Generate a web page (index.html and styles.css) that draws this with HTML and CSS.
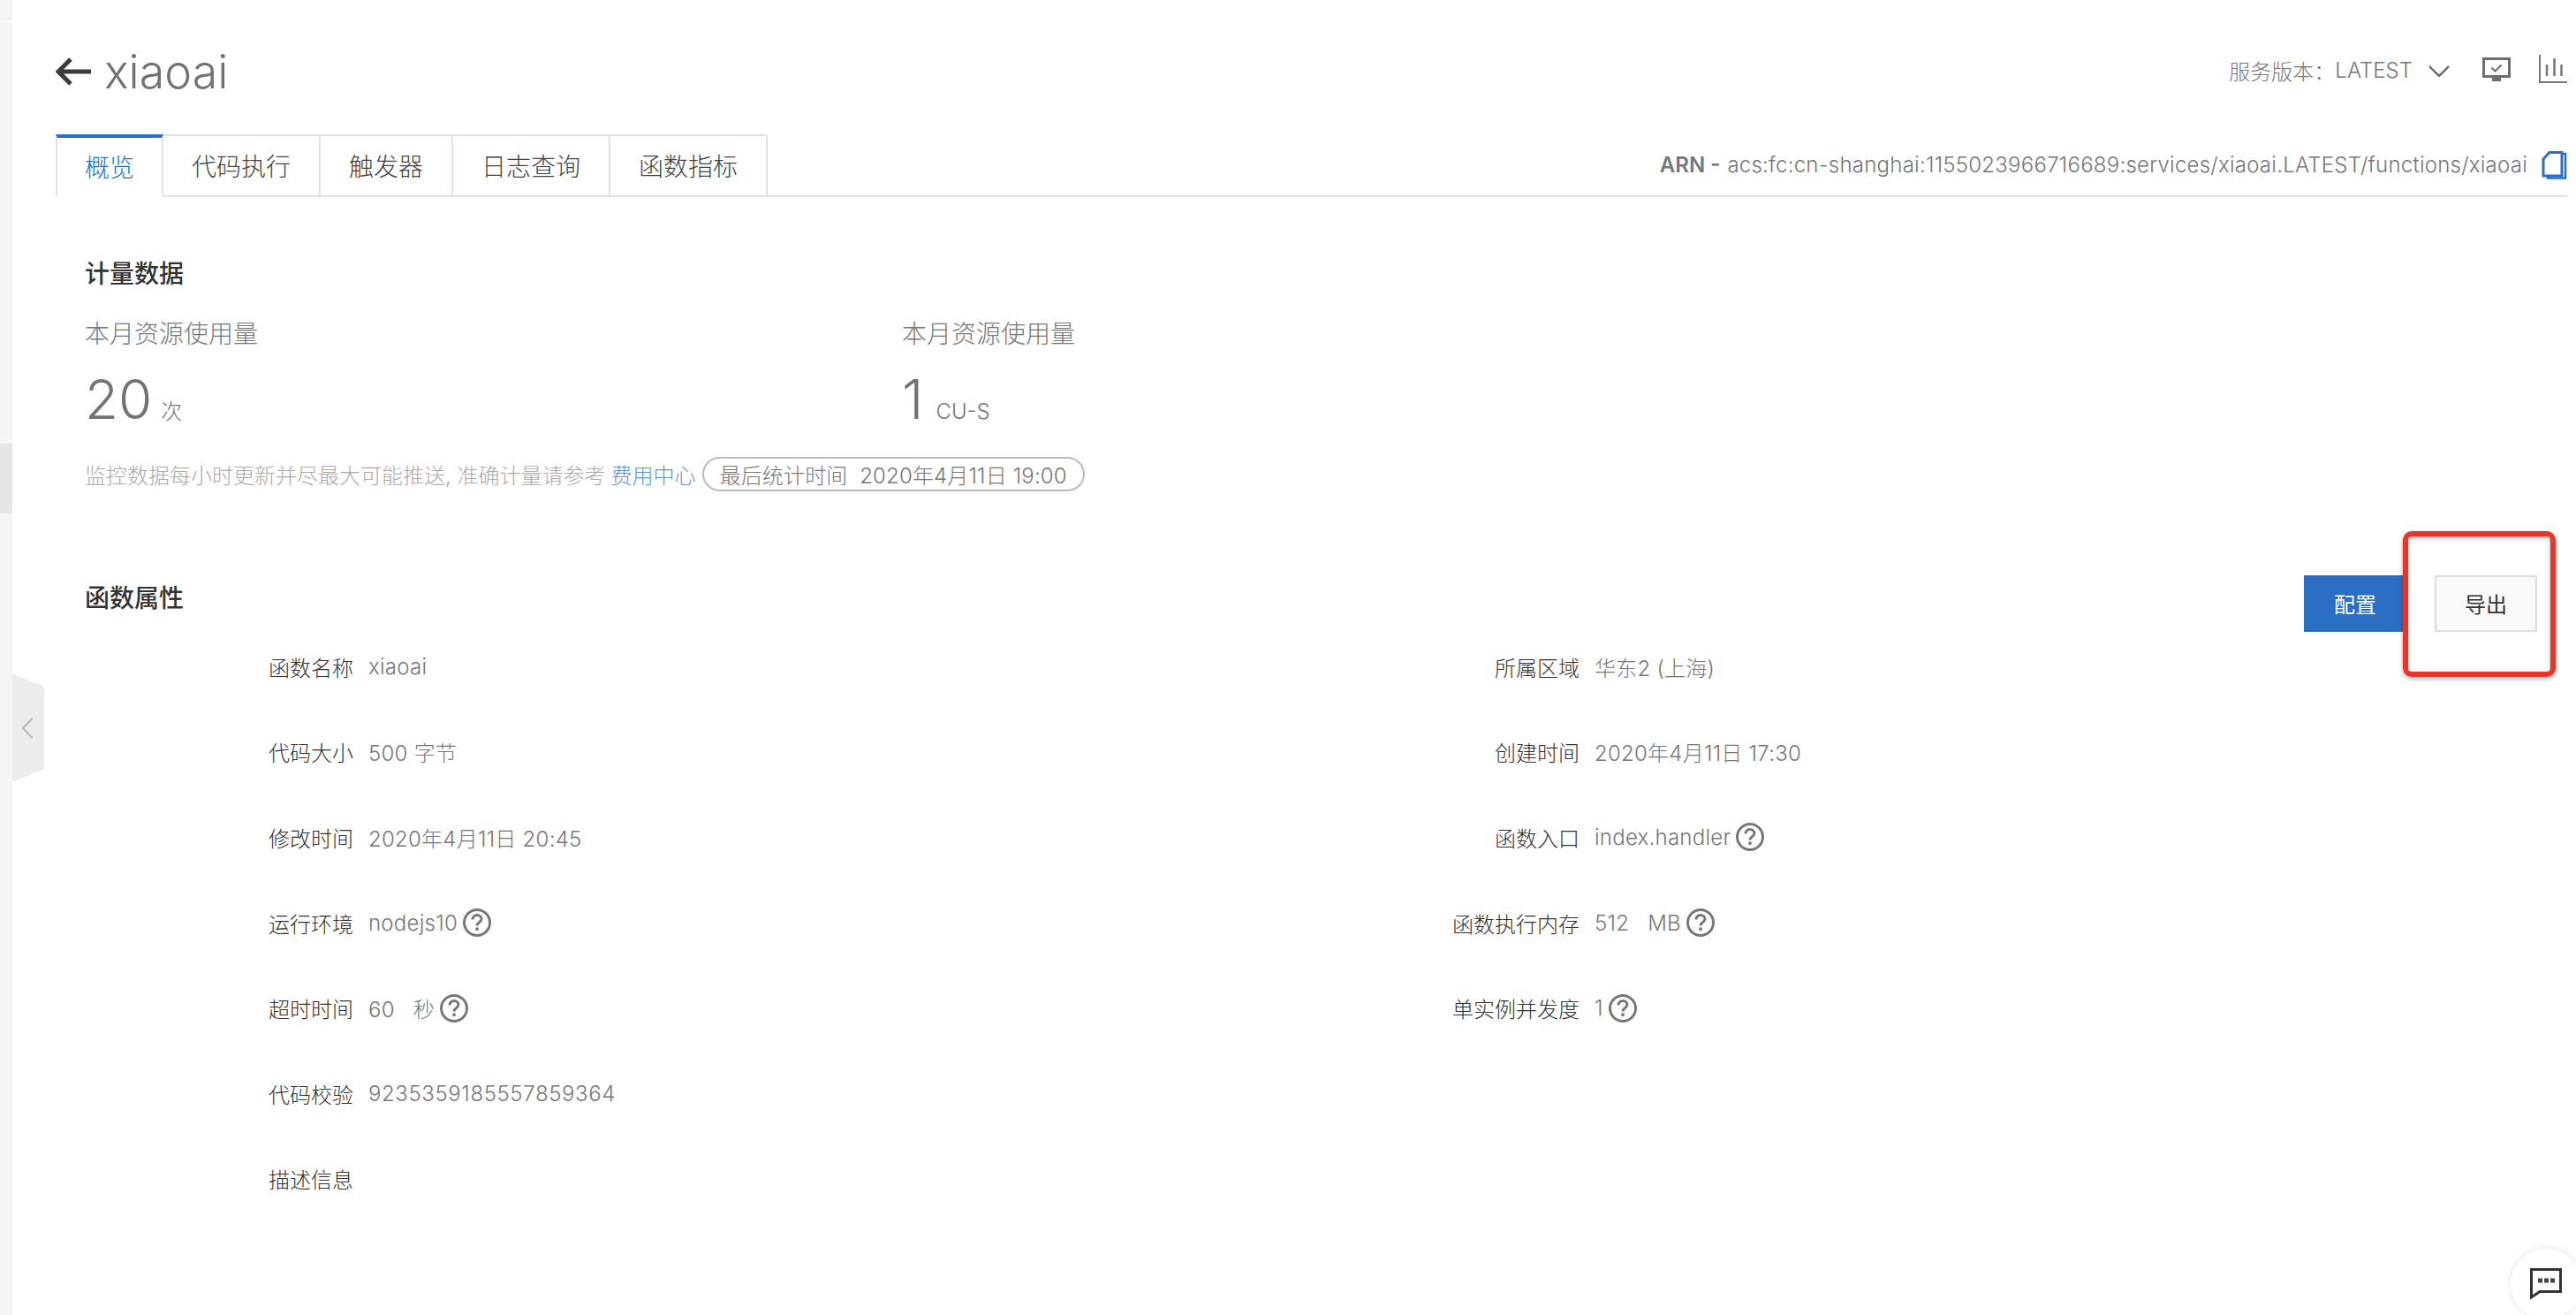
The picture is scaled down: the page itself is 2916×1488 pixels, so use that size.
FILE: index.html
```html
<!DOCTYPE html>
<html lang="zh-CN">
<head>
<meta charset="utf-8">
<title>xiaoai</title>
<link rel="stylesheet" href="styles.css">
</head>
<body>
<div class="app">
  <aside class="rail">
    <div class="rail-line"></div>
    <div class="rail-thumb"></div>
  </aside>
  <main class="main">
    <header class="top">
      <div class="title">
        <svg class="back" viewBox="0 0 40 32" width="40" height="32"><path d="M17 2 3 16l14 14M3 16h37" fill="none" stroke="#383d42" stroke-width="5"/></svg>
        <h1 class="name">xiaoai</h1>
      </div>
      <div class="tools">
        <span class="version">服务版本：</span><span class="latest">LATEST</span>
        <svg class="chev" viewBox="0 0 24 13" width="24" height="13"><path d="M1 1l11 11L23 1" fill="none" stroke="#666" stroke-width="2.4"/></svg>
        <svg class="monitor" viewBox="0 0 32 28" width="32" height="28"><path d="M1.500 1.500h29v20h-29z" fill="none" stroke="#6e6e6e" stroke-width="3"/><path d="M11 27h10v-5H11z" fill="#6e6e6e"/><path d="M10.500 11.500l4 4 7-7" fill="none" stroke="#6e6e6e" stroke-width="2"/></svg>
        <svg class="bars" viewBox="0 0 32 32" width="32" height="32"><path d="M1 0v31h31" fill="none" stroke="#777" stroke-width="2"/><path d="M9 11v13M17.500 4v20M25.500 11v13" fill="none" stroke="#777" stroke-width="2.500"/></svg>
      </div>
    </header>
    <nav class="tabbar">
      <a class="tab tab-active">概览</a>
      <a class="tab tab-code">代码执行</a>
      <a class="tab tab-trigger">触发器</a>
      <a class="tab tab-code">日志查询</a>
      <a class="tab tab-code">函数指标</a>
      <div class="arn">
        <b class="arn-key">ARN -</b>
        <span class="arn-val">acs:fc:cn-shanghai:1155023966716689:services/xiaoai.LATEST/functions/xiaoai</span>
        <svg class="copy" viewBox="0 0 29 32" width="29" height="32"><path d="M7 28v2.500h20V3h-4" fill="none" stroke="#2b6fc4" stroke-width="2.500"/><path d="M9 1.500h14v26.500H2V9z" fill="none" stroke="#2b6fc4" stroke-width="3"/></svg>
      </div>
    </nav>
    <section class="usage">
      <h2 class="heading">计量数据</h2>
      <div class="metrics">
        <div class="metric">
          <div class="metric-label">本月资源使用量</div>
          <div class="metric-num"><span class="big">20</span><span class="unit">次</span></div>
        </div>
        <div class="metric">
          <div class="metric-label">本月资源使用量</div>
          <div class="metric-num"><span class="big">1</span><span class="unit unit-cu">CU-S</span></div>
        </div>
      </div>
      <div class="hint">
        <span>监控数据每小时更新并尽最大可能推送, 准确计量请参考</span>
        <a class="link">费用中心</a>
        <span class="pill">最后统计时间&nbsp;&nbsp;2020年4月11日 19:00</span>
      </div>
    </section>
    <section class="attrs">
      <div class="attrs-head">
        <h2 class="heading">函数属性</h2>
        <div class="actions">
          <button class="btn btn-primary">配置</button>
          <button class="btn btn-plain">导出</button>
        </div>
      </div>
      <dl class="grid">
        <dt>函数名称</dt><dd>xiaoai</dd>
        <dt>所属区域</dt><dd>华东2 (上海)</dd>
        <dt>代码大小</dt><dd>500 字节</dd>
        <dt>创建时间</dt><dd>2020年4月11日 17:30</dd>
        <dt>修改时间</dt><dd>2020年4月11日 20:45</dd>
        <dt>函数入口</dt><dd>index.handler<svg class="help" viewBox="0 0 32 32" width="32" height="32"><circle cx="16" cy="16" r="14.500" fill="none" stroke="#777" stroke-width="3"/><path d="M11 12.500c0-3 2.300-5 5-5s5 2 5 4.500c0 3.500-5 3.500-5 7.500" fill="none" stroke="#777" stroke-width="3"/><rect x="14.300" y="21.500" width="3.400" height="3.400" fill="#777"/></svg></dd>
        <dt>运行环境</dt><dd>nodejs10<svg class="help" viewBox="0 0 32 32" width="32" height="32"><circle cx="16" cy="16" r="14.500" fill="none" stroke="#777" stroke-width="3"/><path d="M11 12.500c0-3 2.300-5 5-5s5 2 5 4.500c0 3.500-5 3.500-5 7.500" fill="none" stroke="#777" stroke-width="3"/><rect x="14.300" y="21.500" width="3.400" height="3.400" fill="#777"/></svg></dd>
        <dt>函数执行内存</dt><dd>512&nbsp;&nbsp; MB<svg class="help" viewBox="0 0 32 32" width="32" height="32"><circle cx="16" cy="16" r="14.500" fill="none" stroke="#777" stroke-width="3"/><path d="M11 12.500c0-3 2.300-5 5-5s5 2 5 4.500c0 3.500-5 3.500-5 7.500" fill="none" stroke="#777" stroke-width="3"/><rect x="14.300" y="21.500" width="3.400" height="3.400" fill="#777"/></svg></dd>
        <dt>超时时间</dt><dd>60&nbsp;&nbsp; 秒<svg class="help" viewBox="0 0 32 32" width="32" height="32"><circle cx="16" cy="16" r="14.500" fill="none" stroke="#777" stroke-width="3"/><path d="M11 12.500c0-3 2.300-5 5-5s5 2 5 4.500c0 3.500-5 3.500-5 7.500" fill="none" stroke="#777" stroke-width="3"/><rect x="14.300" y="21.500" width="3.400" height="3.400" fill="#777"/></svg></dd>
        <dt>单实例并发度</dt><dd>1<svg class="help" viewBox="0 0 32 32" width="32" height="32"><circle cx="16" cy="16" r="14.500" fill="none" stroke="#777" stroke-width="3"/><path d="M11 12.500c0-3 2.300-5 5-5s5 2 5 4.500c0 3.500-5 3.500-5 7.500" fill="none" stroke="#777" stroke-width="3"/><rect x="14.300" y="21.500" width="3.400" height="3.400" fill="#777"/></svg></dd>
        <dt>代码校验</dt><dd class="hash">9235359185557859364</dd>
        <dt class="blank"></dt><dd class="blank"></dd>
        <dt>描述信息</dt><dd></dd>
      </dl>
    </section>
  </main>
  <div class="handle">
    <svg viewBox="0 0 14 24" width="14" height="24"><path d="M12.500 1 2 12l10.500 11" fill="none" stroke="#bdbdbd" stroke-width="2.500"/></svg>
  </div>
  <div class="annot"></div>
  <div class="chat">
    <svg viewBox="0 0 36 36" width="36" height="36"><path d="M1.500 1.500h33v25H11L1.500 33z" fill="none" stroke="#333" stroke-width="3"/><path d="M9 11.500h5v5H9zM16 11.500h5v5h-5zM23 11.500h5v5h-5z" fill="#444"/></svg>
  </div>
</div>
</body>
</html>
```

FILE: styles.css
```css
* { box-sizing: border-box; }
html, body { margin: 0; padding: 0; background: #fff; }
body {
  font-family: Inter, "Noto Sans CJK SC", sans-serif;
  font-size: 24px;
  font-weight: 400;
  color: #777;
}
.app { position: relative; display: flex; width: 2916px; height: 1488px; overflow: hidden; }
.rail { flex: none; width: 14px; height: 100%; background: #f5f5f5; padding-top: 20px; }
.rail-line { height: 2px; background: #ececec; }
.rail-thumb { height: 79px; margin-top: 480px; background: #e6e6e6; }
.main { flex: none; width: 2892px; padding-left: 49px; overflow: hidden; }

.top { display: flex; justify-content: space-between; align-items: center; height: 152px; padding-top: 12px; }
.title { display: flex; align-items: center; gap: 15px; }
.name { margin: 0; font-size: 52px; font-weight: 300; line-height: 60px; color: #6f7377; }
.back { margin-top: -2px; }
.tools { display: flex; align-items: center; color: #777; font-weight: 300; margin-top: -6px; }
.chev { margin-left: 18px; margin-top: 2px; }
.monitor { margin-left: 37px; }
.bars { margin-left: 32px; margin-top: -2px; }

.tabbar { display: flex; height: 71px; border-bottom: 2px solid #e2e2e2; }
.tab {
  display: flex; align-items: center; justify-content: center;
  height: 71px; font-size: 28px; font-weight: 300; color: #444;
  border: solid #e2e2e2; border-width: 2px 2px 2px 0; padding-bottom: 2px;
}
.tab-active { width: 122px; color: #2b6fc4; background: #fff; border-top: 4px solid #2b6fc4; border-left: 2px solid #e2e2e2; border-bottom-color: #fff; }
.tab-code { width: 178px; }
.tab-trigger { width: 150px; }
.arn { margin-left: auto; display: flex; align-items: center; gap: 8px; color: #777; font-weight: 300; }
.arn-key { font-weight: 600; color: #777; }
.arn-val { letter-spacing: .24px; }
.copy { margin-left: 8px; }

.usage { padding-left: 33px; }
.heading { margin: 0; font-size: 28px; line-height: 40px; font-weight: 500; color: #333; }
.usage .heading { margin-top: 67px; }
.metrics { display: flex; margin-top: 28px; }
.metric { width: 925px; }
.metric-label { font-size: 28px; font-weight: 300; line-height: 40px; color: #777; }
.metric-num { display: flex; align-items: baseline; margin-top: 15px; height: 78px; }
.big { font-size: 62px; line-height: 78px; color: #6f7377; font-weight: 300; }
.unit { margin-left: 10px; font-size: 24px; font-weight: 300; color: #777; }
.unit-cu { margin-left: 14px; }
.hint { display: flex; align-items: center; margin-top: 25px; height: 40px; color: #aaa; font-weight: 300; white-space: nowrap; }
.link { margin-left: 6px; color: #5b97d6; }
.pill { margin-left: 7px; height: 39px; padding: 0 18px; display: flex; align-items: center; border: 2px solid #bbb; border-radius: 20px; color: #777; letter-spacing: .15px; }

.attrs { padding-left: 33px; }
.attrs-head { display: flex; justify-content: space-between; align-items: center; height: 64px; margin-top: 95px; }
.attrs-head .heading { margin-bottom: 12px; }
.actions { display: flex; gap: 32px; margin-right: 34px; }
.btn { width: 116px; height: 64px; font: inherit; font-weight: 400; padding: 0 0 2px; }
.btn-primary { background: #2b6fc4; border: none; color: #fff; }
.btn-plain { background: #f9f9f9; border: 2px solid #ddd; color: #333; }

.grid {
  display: grid;
  grid-template-columns: 304px 1050px 304px 1fr;
  column-gap: 17px;
  grid-auto-rows: 96.6px;
  margin: -9px 0 0;
  align-items: center;
}
.grid dt { text-align: right; color: #333; font-weight: 300; }
.grid dd { margin: 0; display: flex; align-items: center; gap: 6px; color: #777; font-weight: 300; height: 40px; letter-spacing: .25px; }
.grid dd.hash { letter-spacing: .6px; }
.help { flex: none; }

.handle {
  position: absolute; left: 14px; top: 762px; width: 36px; height: 123px;
  display: flex; align-items: center; padding-left: 10px;
  background: #ececec;
  clip-path: polygon(0 0, 100% 15px, 100% 108px, 0 100%);
}
.annot {
  position: absolute; left: 2720px; top: 601px; width: 173px; height: 165px;
  border: 6px solid #e8352a; border-radius: 10px;
  box-shadow: 0 2px 5px rgba(0,0,0,.35), inset 0 2px 5px rgba(0,0,0,.3);
}
.chat {
  position: absolute; left: 2842px; top: 1413px; width: 80px; height: 80px;
  border-radius: 50%; background: #fff; box-shadow: 0 0 8px rgba(0,0,0,.12);
  display: flex; align-items: center; justify-content: center;
}
.blank { visibility: hidden; }
```
